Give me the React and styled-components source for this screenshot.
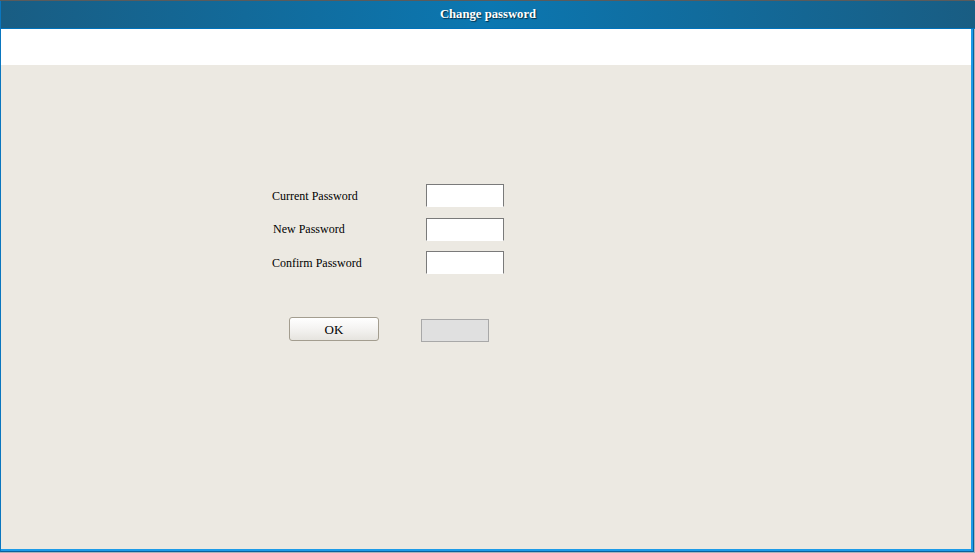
import React from 'react';
import styled, { createGlobalStyle } from 'styled-components'

const GlobalStyle = createGlobalStyle`
  html, body {
    margin: 0;
    padding: 0;
    background: #e4e4e4;
  }
  body {
    font-family: "Liberation Serif", "Times New Roman", serif;
  }
`

const Frame = styled.div`
  box-sizing: border-box;
  width: 975px;
  height: 553px;
  border-top: 1px solid #5b5b5b;
  border-right: 1px solid #a9b3bb;
  border-bottom: 1px solid #a9b3bb;
  display: flex;
`

const Window = styled.div`
  flex: 1;
  display: flex;
  flex-direction: column;
  border-left: 1px solid #0a76bf;
  border-right: 1px solid #0b5f9a;
  border-bottom: 1px solid #0b5f9a;
  box-shadow: inset -2px -2px 0 #1d9be8;
`

const TitleBar = styled.div`
  height: 27px;
  flex-shrink: 0;
  display: flex;
  align-items: center;
  justify-content: center;
  background: linear-gradient(to right, #195d83 0%, #0b77b1 50%, #195d83 100%);
  border-bottom: 1px solid #0072bb;
  margin-right: -2px;
`

const Title = styled.span`
  color: #ffffff;
  font-weight: bold;
  font-size: 12.7px;
  text-shadow: 1px 1px 1px rgba(0, 0, 0, 0.6);
`

const Strip = styled.div`
  height: 36px;
  flex-shrink: 0;
  background: #ffffff;
  margin-right: 2px;
`

const Body = styled.div`
  flex: 1;
  background: #ece9e2;
  margin-right: 2px;
  margin-bottom: 2px;
  padding: 119px 0 0 271px;
`

const FormGrid = styled.div`
  display: grid;
  grid-template-columns: 154px 78px;
  grid-auto-rows: 23px;
  row-gap: 10.5px;
  align-items: center;
`

const Label = styled.label`
  font-size: 12px;
  color: #000;
  padding-top: 1px;
  padding-left: ${p => p.$indent || 0}px;
`

const Input = styled.input`
  box-sizing: border-box;
  width: 78px;
  height: 23px;
  margin: 0;
  padding: 0 2px;
  background: #fff;
  border: 1px solid #7a7a7a;
  border-bottom-color: #ffffff;
  outline: none;
`

const ButtonRow = styled.div`
  display: flex;
  align-items: flex-start;
  margin-top: 43px;
  padding-left: 17px;
`

const OkButton = styled.button`
  box-sizing: border-box;
  width: 90px;
  height: 24px;
  border: 1px solid #a39d8f;
  border-radius: 3px;
  background: linear-gradient(to bottom, #ffffff 0%, #f4f3f1 50%, #e6e4df 100%);
  font-family: "Liberation Serif", "Times New Roman", serif;
  font-size: 13px;
  color: #000;
  padding: 1px 0 0;
`

const BlankButton = styled.button`
  box-sizing: border-box;
  width: 68px;
  height: 23px;
  margin-left: 42px;
  margin-top: 2px;
  border: 1px solid #a8a8a8;
  background: #e0e0e0;
  padding: 0;
`

class App extends React.Component {
  state = {
    current: '',
    novo: '',
    confirm: ''
  }

  onChange = (key) => (event) => {
    this.setState({ [key]: event.target.value });
  }

  render() {
    return (
      <Frame>
        <GlobalStyle />
        <Window>
          <TitleBar>
            <Title>Change password</Title>
          </TitleBar>
          <Strip />
          <Body>
            <FormGrid>
              <Label>Current Password</Label>
              <Input type="password" value={this.state.current} onChange={this.onChange('current')} />
              <Label $indent={1}>New Password</Label>
              <Input type="password" value={this.state.novo} onChange={this.onChange('novo')} />
              <Label>Confirm Password</Label>
              <Input type="password" value={this.state.confirm} onChange={this.onChange('confirm')} />
            </FormGrid>
            <ButtonRow>
              <OkButton>OK</OkButton>
              <BlankButton />
            </ButtonRow>
          </Body>
        </Window>
      </Frame>
    );
  }
}

export default App;
